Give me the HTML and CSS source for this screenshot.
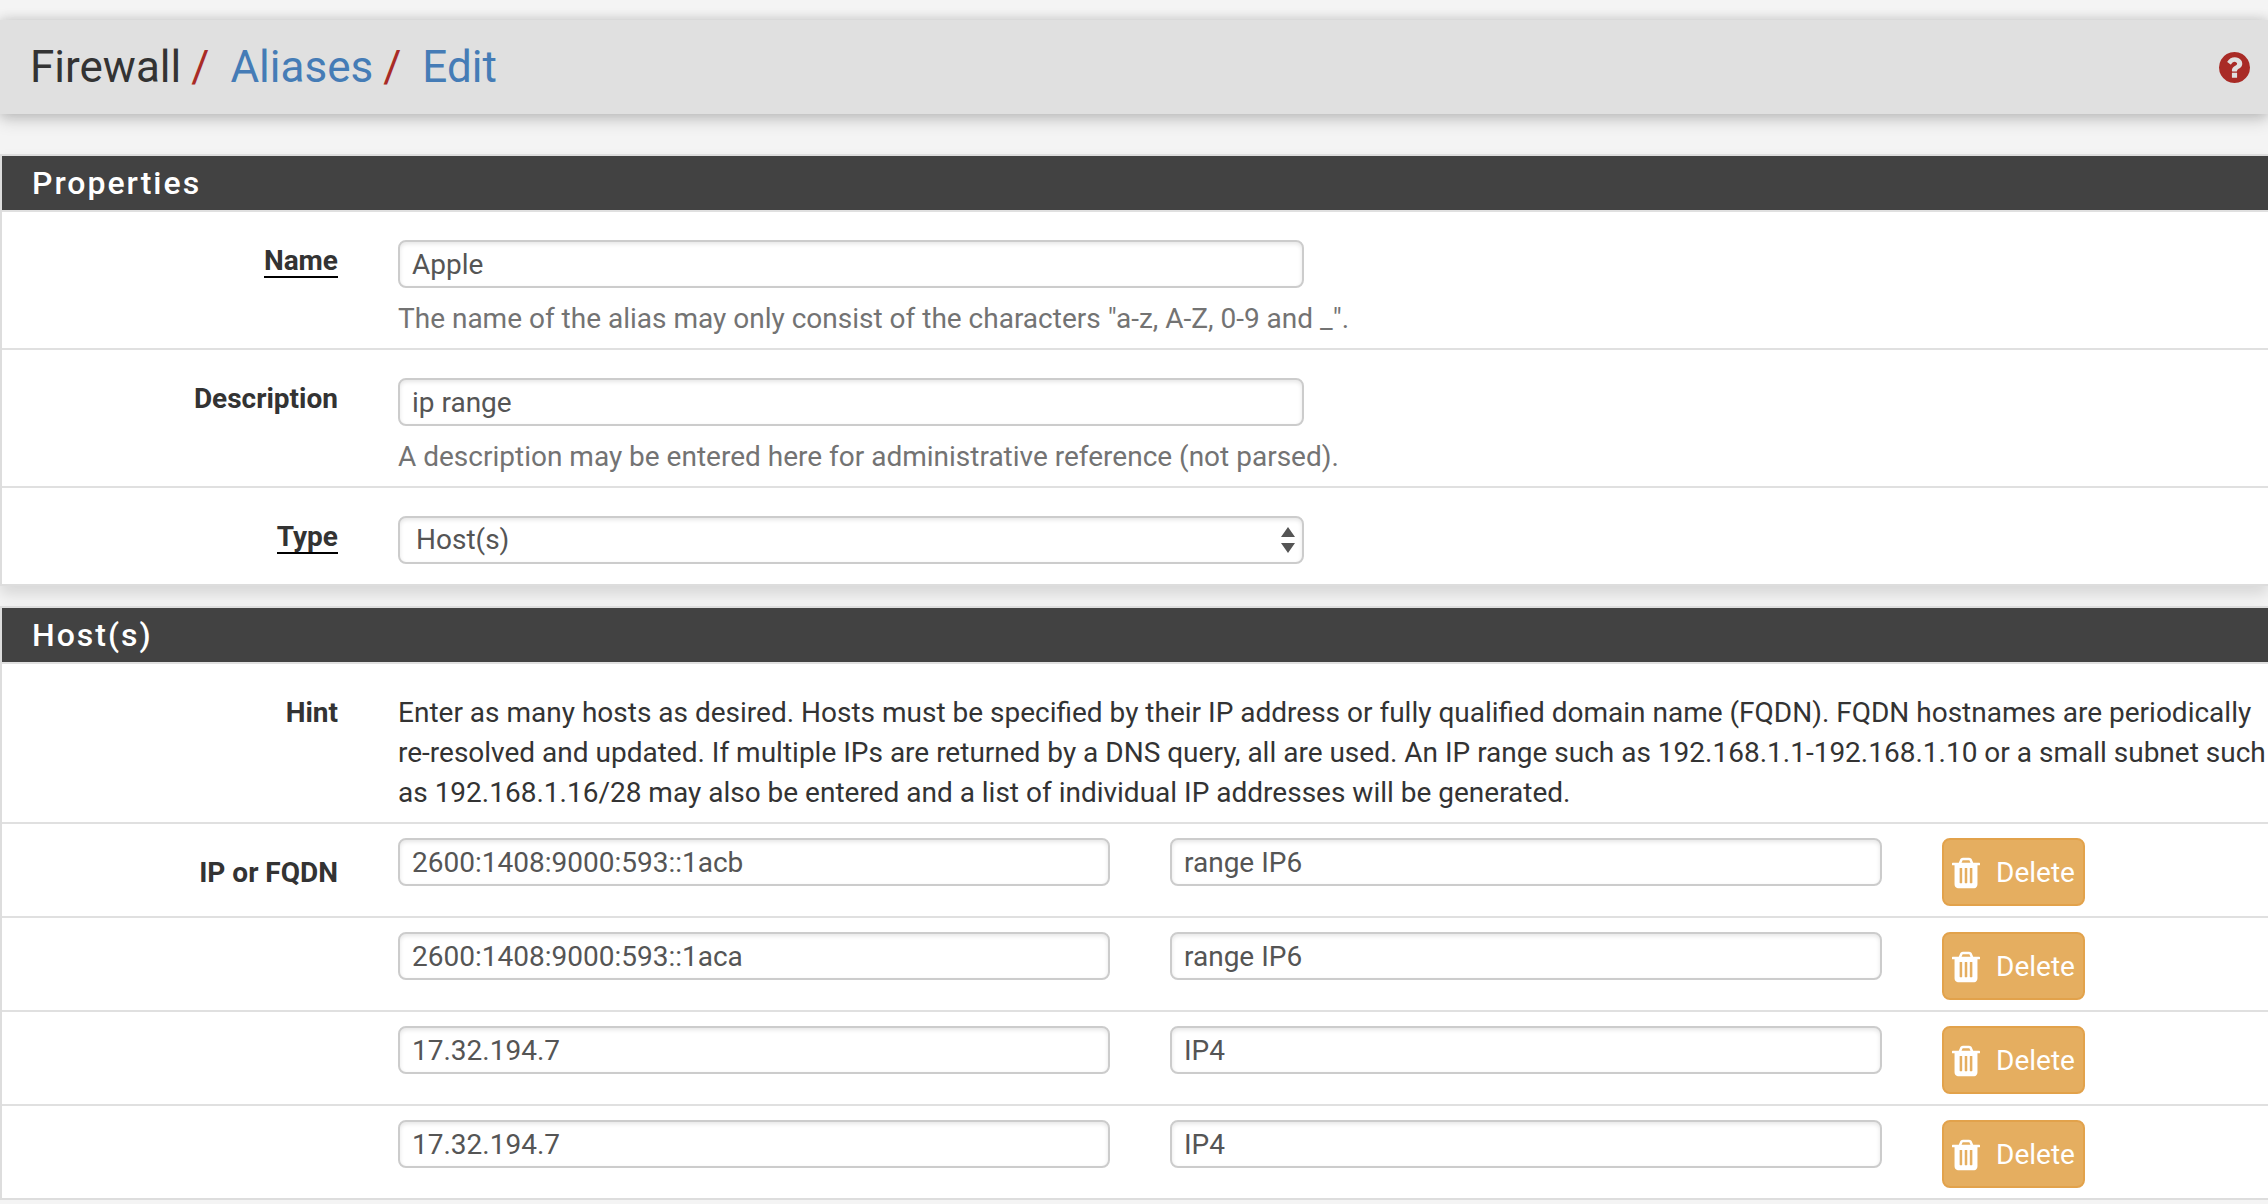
FILE: index.html
```html
<!DOCTYPE html>
<html lang="en">
<head>
    <meta charset="UTF-8">
    <meta name="viewport" content="width=device-width, initial-scale=1.0">
    <title>Firewall: Aliases: Edit</title>
    <link rel="stylesheet" href="styles.css">
</head>
<body>
    <svg width="0" height="0" class="icon-defs" aria-hidden="true">
        <symbol id="icon-trash" viewBox="192 128 1408 1536">
            <path d="M704 1376v-704q0-14-9-23t-23-9h-64q-14 0-23 9t-9 23v704q0 14 9 23t23 9h64q14 0 23-9t9-23zm256 0v-704q0-14-9-23t-23-9h-64q-14 0-23 9t-9 23v704q0 14 9 23t23 9h64q14 0 23-9t9-23zm256 0v-704q0-14-9-23t-23-9h-64q-14 0-23 9t-9 23v704q0 14 9 23t23 9h64q14 0 23-9t9-23zm-544-992h448l-48-117q-7-9-17-11h-317q-10 2-17 11zm928 32v64q0 14-9 23t-23 9h-96v948q0 83-47 143.5t-113 60.5h-832q-66 0-113-58.5t-47-141.5v-952h-96q-14 0-23-9t-9-23v-64q0-14 9-23t23-9h309l70-167q15-37 54-63t79-26h320q40 0 79 26t54 63l70 167h309q14 0 23 9t9 23z"/>
        </symbol>
    </svg>

    <header class="page-header">
        <ol class="breadcrumb">
            <li>Firewall</li>
            <li><a href="#">Aliases</a></li>
            <li><a href="#">Edit</a></li>
        </ol>
        <a href="#" class="help-link" aria-label="Help">
            <svg class="help-icon" viewBox="128 128 1536 1536">
                <path d="M1024 1376v-192q0-14-9-23t-23-9h-192q-14 0-23 9t-9 23v192q0 14 9 23t23 9h192q14 0 23-9t9-23zm256-672q0-88-55.5-163t-138.5-116-170-41q-243 0-371 213-15 24 8 42l132 100q7 6 19 6 16 0 25-12 53-68 86-92 34-24 86-24 48 0 85.5 26t37.5 59q0 38-20 61t-68 45q-63 28-115.5 86.5t-52.5 125.5v36q0 14 9 23t23 9h192q14 0 23-9t9-23q0-19 21.5-49.5t54.5-49.5q32-18 49-28.5t46-35 44.5-48 28-60.5 12.5-81zm384 192q0 209-103 385.5t-279.5 279.5-385.5 103-385.5-103-279.5-279.5-103-385.5 103-385.5 279.5-279.5 385.5-103 385.5 103 279.5 279.5 103 385.5z"/>
            </svg>
        </a>
    </header>

    <form class="alias-form">
        <section class="panel">
            <h2 class="panel-title">Properties</h2>
            <div class="form-row">
                <label class="row-label" for="name"><span class="required">Name</span></label>
                <div class="row-body">
                    <input class="form-control" type="text" id="name" value="Apple">
                    <p class="help-block">The name of the alias may only consist of the characters "a-z, A-Z, 0-9 and _".</p>
                </div>
            </div>
            <div class="form-row">
                <label class="row-label" for="descr">Description</label>
                <div class="row-body">
                    <input class="form-control" type="text" id="descr" value="ip range">
                    <p class="help-block">A description may be entered here for administrative reference (not parsed).</p>
                </div>
            </div>
            <div class="form-row">
                <label class="row-label" for="type"><span class="required">Type</span></label>
                <div class="row-body row-body-last">
                    <div class="select-wrap">
                        <select class="form-control" id="type">
                            <option>Host(s)</option>
                            <option>Network(s)</option>
                            <option>Port(s)</option>
                        </select>
                        <svg class="select-arrows" viewBox="0 0 14 26">
                            <path d="M7 0l7 10H0zM7 26l7-10H0z"/>
                        </svg>
                    </div>
                </div>
            </div>
        </section>

        <section class="panel">
            <h2 class="panel-title">Host(s)</h2>
            <div class="form-row">
                <div class="row-label">Hint</div>
                <p class="row-body hint">Enter as many hosts as desired. Hosts must be specified by their IP address or fully qualified domain name (FQDN). FQDN hostnames are periodically re-resolved and updated. If multiple IPs are returned by a DNS query, all are used. An IP range such as 192.168.1.1-192.168.1.10 or a small subnet such as 192.168.1.16/28 may also be entered and a list of individual IP addresses will be generated.</p>
            </div>
            <div class="form-row host-row">
                <label class="row-label" for="address0">IP or FQDN</label>
                <div class="host-cell"><input class="form-control" type="text" id="address0" value="2600:1408:9000:593::1acb"></div>
                <div class="host-cell"><input class="form-control" type="text" aria-label="Description" value="range IP6"></div>
                <div class="host-cell"><button type="button" class="btn-delete"><svg class="btn-icon"><use href="#icon-trash"/></svg>Delete</button></div>
            </div>
            <div class="form-row host-row">
                <div class="row-label"></div>
                <div class="host-cell"><input class="form-control" type="text" aria-label="IP or FQDN" value="2600:1408:9000:593::1aca"></div>
                <div class="host-cell"><input class="form-control" type="text" aria-label="Description" value="range IP6"></div>
                <div class="host-cell"><button type="button" class="btn-delete"><svg class="btn-icon"><use href="#icon-trash"/></svg>Delete</button></div>
            </div>
            <div class="form-row host-row">
                <div class="row-label"></div>
                <div class="host-cell"><input class="form-control" type="text" aria-label="IP or FQDN" value="17.32.194.7"></div>
                <div class="host-cell"><input class="form-control" type="text" aria-label="Description" value="IP4"></div>
                <div class="host-cell"><button type="button" class="btn-delete"><svg class="btn-icon"><use href="#icon-trash"/></svg>Delete</button></div>
            </div>
            <div class="form-row host-row">
                <div class="row-label"></div>
                <div class="host-cell"><input class="form-control" type="text" aria-label="IP or FQDN" value="17.32.194.7"></div>
                <div class="host-cell"><input class="form-control" type="text" aria-label="Description" value="IP4"></div>
                <div class="host-cell"><button type="button" class="btn-delete"><svg class="btn-icon"><use href="#icon-trash"/></svg>Delete</button></div>
            </div>
        </section>
    </form>
</body>
</html>
```
FILE: styles.css
```css
* {
    box-sizing: border-box;
}

body {
    margin: 0;
    font-family: Roboto, sans-serif;
    font-size: 28px;
    line-height: 40px;
    color: #333;
    background-color: #f4f4f4;
}

p {
    margin: 0;
}

.icon-defs {
    display: none;
}

/* Header bar */
.page-header {
    display: flex;
    justify-content: space-between;
    align-items: center;
    margin-top: 20px;
    padding: 22px 18px 22px 30px;
    background-color: #e0e0e0;
    box-shadow: 0 0 12px rgba(0, 0, 0, 0.16), 0 6px 16px rgba(0, 0, 0, 0.16);
}

.breadcrumb {
    display: flex;
    margin: 0;
    padding: 0;
    list-style: none;
    font-size: 44px;
    line-height: 50px;
}

.breadcrumb li + li::before {
    content: "/";
    padding: 0 21px 0 10px;
    color: #a92b26;
}

.breadcrumb a {
    color: #457cb6;
    text-decoration: none;
}

.help-link {
    display: flex;
}

.help-icon {
    width: 31px;
    height: 31px;
    fill: #a92b26;
}

/* Panels */
.alias-form {
    display: flex;
    flex-direction: column;
    gap: 20px;
    margin-top: 40px;
}

.panel {
    background-color: #fff;
    border: 2px solid #ddd;
    border-right: 0;
    box-shadow: 0 8px 14px rgba(0, 0, 0, 0.12);
}

.panel-title {
    margin: 0;
    padding: 7px 30px;
    font-size: 32px;
    font-weight: 500;
    letter-spacing: 2px;
    color: #fff;
    background-color: #424242;
}

.form-row {
    display: grid;
    grid-template-columns: 366fr 772fr 772fr 356fr;
    border-top: 2px solid #e0e0e0;
}

.row-label {
    padding: 29px 30px 0;
    font-weight: 700;
    text-align: right;
}

.required {
    display: inline-block;
    line-height: 30px;
    border-bottom: 2px solid #000;
}

.row-body {
    grid-column: 2 / -1;
    padding: 28px 0 9px 30px;
}

.row-body-last {
    padding-bottom: 20px;
}

.hint {
    padding-top: 29px;
}

.row-body .form-control {
    width: 906px;
    max-width: 100%;
}

.form-control {
    display: block;
    width: 100%;
    height: 48px;
    padding: 0 12px;
    font: inherit;
    color: #555;
    background-color: #fff;
    border: 2px solid #ccc;
    border-radius: 8px;
    box-shadow: inset 0 2px 4px rgba(0, 0, 0, 0.1);
}

.help-block {
    margin-top: 11px;
    color: #737373;
}

.select-wrap {
    position: relative;
    width: 906px;
    max-width: 100%;
}

select.form-control {
    padding: 0 16px;
    appearance: none;
}

.select-arrows {
    position: absolute;
    top: 11px;
    right: 9px;
    width: 14px;
    height: 26px;
    fill: #555;
    pointer-events: none;
}

/* Host list */
.host-cell {
    padding: 14px 30px 10px;
}

.btn-delete {
    display: flex;
    align-items: center;
    gap: 16px;
    height: 68px;
    padding: 2px 8px 0;
    font: inherit;
    color: #fff;
    background-color: #e5ae60;
    border: 2px solid #e2a24b;
    border-radius: 8px;
}

.btn-icon {
    width: 28px;
    height: 32px;
    fill: #fff;
}
```
